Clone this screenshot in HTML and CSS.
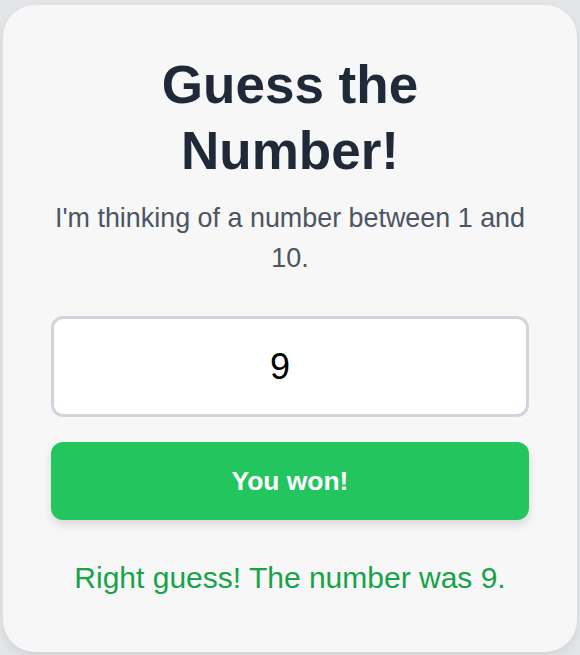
FILE: index.html
```html
<!DOCTYPE html>
<html lang="en">
<head>
<meta charset="utf-8">
<title>Guess the Number</title>
<link rel="stylesheet" href="styles.css">
</head>
<body>
<main class="card">
  <h1 class="title">Guess the Number!</h1>
  <p class="subtitle">I'm thinking of a number between 1 and 10.</p>
  <input class="guess-input" type="number" value="9">
  <button class="guess-btn" type="button">You won!</button>
  <p class="result">Right guess! The number was 9.</p>
</main>
</body>
</html>
```
FILE: styles.css
```css
* { box-sizing: border-box; }
html, body {
  margin: 0;
  height: 100%;
}
body {
  background: #e4e5e9;
  padding: 5px 3px 3px 3px;
  font-family: "Liberation Sans", Arial, sans-serif;
}
.card {
  background: #f7f7f7;
  border-radius: 32px;
  box-shadow: 0 4px 10px rgba(0, 0, 0, 0.08);
  height: 647px;
  padding: 47px 48px 48px 48px;
  display: flex;
  flex-direction: column;
  text-align: center;
}
.title {
  margin: 0;
  font-size: 53px;
  line-height: 66px;
  font-weight: 700;
  color: #1f2937;
}
.subtitle {
  margin: 14px 0 0 0;
  font-size: 26.9px;
  line-height: 40px;
  color: #4b5563;
}
.guess-input {
  margin-top: 38px;
  width: 100%;
  height: 101px;
  padding: 0 20px 0 0;
  border: 3px solid #d1d5db;
  border-radius: 12px;
  background: #ffffff;
  font-family: "Liberation Sans", Arial, sans-serif;
  font-size: 36px;
  text-align: center;
  color: #000;
  outline: none;
  -moz-appearance: textfield;
}
.guess-input::-webkit-outer-spin-button,
.guess-input::-webkit-inner-spin-button {
  -webkit-appearance: none;
  margin: 0;
}
.guess-btn {
  margin-top: 25px;
  width: 100%;
  height: 78px;
  border: none;
  border-radius: 12px;
  background: #22c55e;
  color: #ffffff;
  font-family: "Liberation Sans", Arial, sans-serif;
  font-size: 26.4px;
  font-weight: 700;
  box-shadow: 0 5px 10px rgba(0, 0, 0, 0.12);
}
.result {
  margin: 36px 0 0 0;
  font-size: 30px;
  line-height: 44px;
  color: #16a34a;
}
```
